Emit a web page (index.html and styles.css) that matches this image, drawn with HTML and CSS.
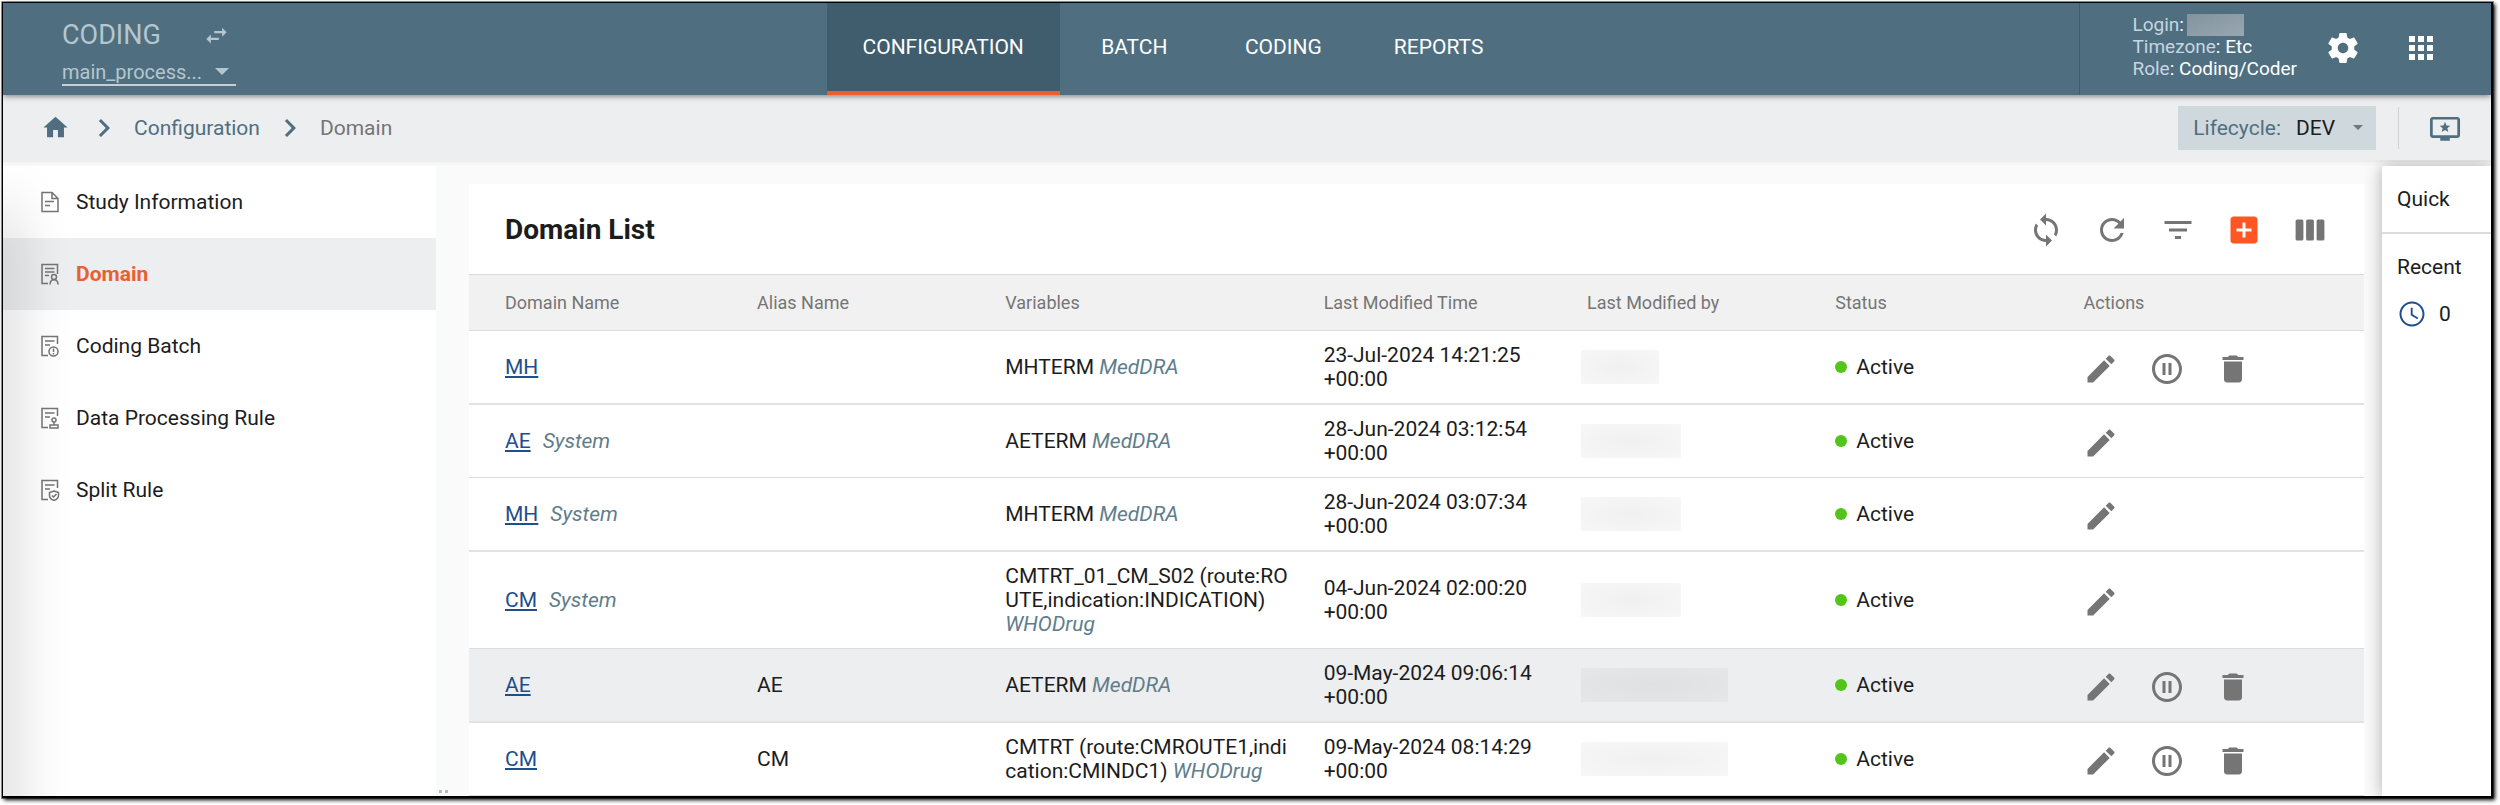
FILE: index.html
```html
<!DOCTYPE html>
<html lang="en">
<head>
<meta charset="utf-8">
<title>Coding - Domain List</title>
<link rel="stylesheet" href="styles.css">
</head>
<body>
<svg class="sprite" aria-hidden="true">
  <symbol id="swap" viewBox="0 0 24 24"><path d="M6.99 11L3 15l3.99 4v-3H14v-2H6.99v-3zM21 9l-3.99-4v3H10v2h7.01v3L21 9z"/></symbol>
  <symbol id="caret" viewBox="0 0 14 7"><path d="M0 0h14L7 7z"/></symbol>
  <symbol id="gear" viewBox="0 0 24 24"><path d="M19.43 12.98c.04-.32.07-.64.07-.98s-.03-.66-.07-.98l2.11-1.65c.19-.15.24-.42.12-.64l-2-3.46c-.12-.22-.39-.3-.61-.22l-2.49 1c-.52-.4-1.08-.73-1.69-.98l-.38-2.65C14.46 2.18 14.25 2 14 2h-4c-.25 0-.46.18-.49.42l-.38 2.65c-.61.25-1.17.59-1.69.98l-2.49-1c-.23-.09-.49 0-.61.22l-2 3.46c-.13.22-.07.49.12.64l2.11 1.65c-.04.32-.07.65-.07.98s.03.66.07.98l-2.11 1.65c-.19.15-.24.42-.12.64l2 3.46c.12.22.39.3.61.22l2.49-1c.52.4 1.08.73 1.69.98l.38 2.65c.03.24.24.42.49.42h4c.25 0 .46-.18.49-.42l.38-2.65c.61-.25 1.17-.59 1.69-.98l2.49 1c.23.09.49 0 .61-.22l2-3.46c.12-.22.07-.49-.12-.64l-2.11-1.65zM12 15.5c-1.93 0-3.5-1.57-3.5-3.5s1.57-3.5 3.5-3.5 3.5 1.57 3.5 3.5-1.57 3.5-3.5 3.5z"/></symbol>
  <symbol id="apps" viewBox="0 0 24 24"><path d="M4 8h4V4H4v4zm6 12h4v-4h-4v4zm-6 0h4v-4H4v4zm0-6h4v-4H4v4zm6 0h4v-4h-4v4zm6-10v4h4V4h-4zm-6 4h4V4h-4v4zm6 6h4v-4h-4v4zm0 6h4v-4h-4v4z"/></symbol>
  <symbol id="home" viewBox="0 0 24 24"><path d="M10 20v-6h4v6h5v-8h3L12 3 2 12h3v8z"/></symbol>
  <symbol id="chevron" viewBox="0 0 24 24"><path d="M10 6L8.590 7.410 13.170 12l-4.580 4.590L10 18l6-6z"/></symbol>
  <symbol id="monitor" viewBox="0 0 24 24"><path d="M21 3.500H3c-1.100 0-2 .9-2 2v11.500c0 1.100.9 2 2 2h5.500V21h7v-2H21c1.100 0 1.990-.9 1.990-2L23 5.500c0-1.100-.9-2-2-2zm0 13.500H3V5.500h18v11.500z" transform="translate(1.100 1.400) scale(.91)"/><path d="M12 7.900l.95 2.450 2.600.15-2 1.650.65 2.550-2.200-1.400-2.200 1.400.65-2.550-2-1.650 2.600-.15z"/></symbol>
  <symbol id="sync" viewBox="0 0 24 24"><path d="M12 4V1L8 5l4 4V6c3.310 0 6 2.690 6 6 0 1.010-.25 1.970-.7 2.800l1.460 1.460C19.540 15.030 20 13.570 20 12c0-4.420-3.580-8-8-8zm0 14c-3.310 0-6-2.690-6-6 0-1.010.25-1.970.7-2.800L5.240 7.740C4.460 8.970 4 10.430 4 12c0 4.420 3.580 8 8 8v3l4-4-4-4v3z"/></symbol>
  <symbol id="refresh" viewBox="0 0 24 24"><path d="M17.650 6.350C16.200 4.900 14.210 4 12 4c-4.420 0-7.990 3.580-7.990 8s3.570 8 7.990 8c3.730 0 6.840-2.550 7.730-6h-2.080c-.82 2.330-3.040 4-5.650 4-3.310 0-6-2.690-6-6s2.690-6 6-6c1.660 0 3.140.69 4.220 1.780L13 11h7V4l-2.350 2.350z"/></symbol>
  <symbol id="filter" viewBox="0 0 24 24"><path d="M10 18h4v-2h-4v2zM3 6v2h18V6H3zm3 7h12v-2H6v2z"/></symbol>
  <symbol id="add" viewBox="0 0 24 24"><path d="M19 3H5c-1.110 0-2 .9-2 2v14c0 1.100.89 2 2 2h14c1.100 0 2-.9 2-2V5c0-1.100-.9-2-2-2zm-2 10h-4v4h-2v-4H7v-2h4V7h2v4h4v2z"/></symbol>
  <symbol id="columns" viewBox="0 0 24 24"><rect x="2.400" y="5" width="5.200" height="14" rx="1"/><rect x="9.400" y="5" width="5.200" height="14" rx="1"/><rect x="16.400" y="5" width="5.200" height="14" rx="1"/></symbol>
  <symbol id="edit" viewBox="0 0 24 24"><path d="M3 17.250V21h3.750L17.810 9.940l-3.750-3.750L3 17.250zM20.710 7.040c.39-.39.39-1.020 0-1.410l-2.340-2.340c-.39-.39-1.020-.39-1.410 0l-1.830 1.830 3.750 3.750 1.830-1.830z"/></symbol>
  <symbol id="pause" viewBox="0 0 24 24"><path d="M9 16h2V8H9v8zm3-14C6.480 2 2 6.480 2 12s4.480 10 10 10 10-4.480 10-10S17.520 2 12 2zm0 18c-4.410 0-8-3.590-8-8s3.590-8 8-8 8 3.590 8 8-3.590 8-8 8zm1-4h2V8h-2v8z"/></symbol>
  <symbol id="trash" viewBox="0 0 24 24"><path d="M6 19c0 1.100.9 2 2 2h8c1.100 0 2-.9 2-2V7H6v12zM19 4h-3.500l-1-1h-5l-1 1H5v2h14V4z"/></symbol>
  <symbol id="clock" viewBox="0 0 24 24"><path d="M11.990 2C6.470 2 2 6.480 2 12s4.470 10 9.990 10C17.520 22 22 17.520 22 12S17.520 2 11.990 2zM12 20.400c-4.640 0-8.400-3.760-8.400-8.400s3.760-8.400 8.400-8.400 8.400 3.760 8.400 8.400-3.760 8.400-8.400 8.400z"/><path d="M12.500 7H11v6l5.250 3.150.75-1.230-4.500-2.670z"/></symbol>
  <symbol id="doc" viewBox="0 0 20 22"><path d="M12 1.500H2v19h16V7.500zM12 1.500v6h6M5 10.500h9M5 14.500h5"/></symbol>
  <symbol id="doc-user" viewBox="0 0 20 22"><path d="M8 20.500H2v-19h15.500V11M5 5.500h9.500M5 9h9.500M5 12.500h4"/><circle cx="14" cy="14" r="2.500"/><path d="M10 21.500c0-6.500 8-6.500 8 0"/></symbol>
  <symbol id="doc-alert" viewBox="0 0 20 22"><path d="M8 20.500H2v-19h15.500V9M5 6h9.500M5 10h5"/><circle cx="13.500" cy="16.500" r="4.500"/><path d="M13.500 13.500v3.500M13.500 18v1.500"/></symbol>
  <symbol id="doc-stamp" viewBox="0 0 20 22"><path d="M8 20.500H2v-19h15.500V9M5 6h9.500M5 10h5"/><circle cx="14" cy="13" r="2"/><path d="M14 15v3M10 21v-3h8v3z"/></symbol>
  <symbol id="doc-shield" viewBox="0 0 20 22"><path d="M8 20.500H2v-19h15.500V9M5 6h9.500M5 10h5"/><path d="M14 12l4.500 1.500v3c0 2.500-2 4-4.500 5-2.500-1-4.500-2.500-4.500-5v-3zM12 16.500l1.500 1.500 3-3"/></symbol>
</svg>

<div class="window">
  <header class="topbar">
    <div class="brand">
      <div class="brand-row">
        <span class="brand-name">CODING</span>
        <button class="icon-btn" type="button" aria-label="Switch application"><svg class="icon-swap"><use href="#swap"/></svg></button>
      </div>
      <div class="process">
        <select class="process-select" aria-label="Process"><option>main_process...</option></select>
        <svg class="caret"><use href="#caret"/></svg>
      </div>
    </div>
    <nav class="tabs" aria-label="Main">
      <a class="tab tab-active" href="#configuration">CONFIGURATION</a>
      <a class="tab" href="#batch">BATCH</a>
      <a class="tab" href="#coding">CODING</a>
      <a class="tab" href="#reports">REPORTS</a>
    </nav>
    <div class="account">
      <div class="account-info">
        <div class="account-line"><span class="account-key">Login</span>:<span class="account-mask"></span></div>
        <div><span class="account-key">Timezone</span>: Etc</div>
        <div><span class="account-key">Role</span>: Coding/Coder</div>
      </div>
      <div class="account-tools">
        <button class="icon-btn" type="button" aria-label="Settings"><svg class="icon"><use href="#gear"/></svg></button>
        <button class="icon-btn" type="button" aria-label="Applications"><svg class="icon"><use href="#apps"/></svg></button>
      </div>
    </div>
  </header>

  <div class="subbar">
    <nav class="crumbs" aria-label="Breadcrumb">
      <a class="crumb-home" href="#home" aria-label="Home"><svg class="icon-home"><use href="#home"/></svg></a>
      <svg class="icon"><use href="#chevron"/></svg>
      <a class="crumb" href="#configuration">Configuration</a>
      <svg class="icon"><use href="#chevron"/></svg>
      <span class="crumb-current">Domain</span>
    </nav>
    <div class="subbar-tools">
      <div class="lifecycle">
        <label class="lifecycle-label" for="lifecycle">Lifecycle:</label>
        <select class="lifecycle-select" id="lifecycle"><option>DEV</option></select>
        <svg class="caret-small"><use href="#caret"/></svg>
      </div>
      <div class="subbar-quick">
        <button class="icon-btn" type="button" aria-label="Quick access"><svg class="icon"><use href="#monitor"/></svg></button>
      </div>
    </div>
  </div>

  <div class="workspace">
    <nav class="sidebar" aria-label="Configuration">
      <a class="side-link" href="#study"><svg class="side-icon"><use href="#doc"/></svg>Study Information</a>
      <a class="side-link side-active" href="#domain"><svg class="side-icon"><use href="#doc-user"/></svg>Domain</a>
      <a class="side-link" href="#coding-batch"><svg class="side-icon"><use href="#doc-alert"/></svg>Coding Batch</a>
      <a class="side-link" href="#data-rule"><svg class="side-icon"><use href="#doc-stamp"/></svg>Data Processing Rule</a>
      <a class="side-link" href="#split-rule"><svg class="side-icon"><use href="#doc-shield"/></svg>Split Rule</a>
    </nav>
    <div class="splitter"><span class="splitter-dot"></span><span class="splitter-dot"></span></div>

    <main class="card">
      <div class="card-head">
        <h1 class="card-title">Domain List</h1>
        <div class="card-tools">
          <button class="icon-btn" type="button" aria-label="Sync"><svg class="icon"><use href="#sync"/></svg></button>
          <button class="icon-btn" type="button" aria-label="Refresh"><svg class="icon"><use href="#refresh"/></svg></button>
          <button class="icon-btn" type="button" aria-label="Filter"><svg class="icon"><use href="#filter"/></svg></button>
          <button class="icon-btn icon-btn-add" type="button" aria-label="Add domain"><svg class="icon"><use href="#add"/></svg></button>
          <button class="icon-btn" type="button" aria-label="Columns"><svg class="icon"><use href="#columns"/></svg></button>
        </div>
      </div>
      <table class="domains">
        <colgroup><col class="col-name"><col class="col-alias"><col class="col-vars"><col class="col-time"><col class="col-by"><col class="col-status"><col></colgroup>
        <thead>
          <tr><th>Domain Name</th><th>Alias Name</th><th>Variables</th><th>Last Modified Time</th><th>Last Modified by</th><th>Status</th><th>Actions</th></tr>
        </thead>
        <tbody>
          <tr>
            <td><a class="domain-link" href="#d1">MH</a></td><td></td>
            <td class="vars">MHTERM <em class="note">MedDRA</em></td>
            <td>23-Jul-2024 14:21:25 +00:00</td>
            <td><span class="mask mask-short"></span></td>
            <td><span class="status">Active</span></td>
            <td><div class="actions">
              <button class="icon-btn" type="button" aria-label="Edit"><svg class="icon"><use href="#edit"/></svg></button>
              <button class="icon-btn" type="button" aria-label="Pause"><svg class="icon"><use href="#pause"/></svg></button>
              <button class="icon-btn" type="button" aria-label="Delete"><svg class="icon"><use href="#trash"/></svg></button>
            </div></td>
          </tr>
          <tr>
            <td><a class="domain-link" href="#d2">AE</a><em class="note note-system">System</em></td><td></td>
            <td class="vars">AETERM <em class="note">MedDRA</em></td>
            <td>28-Jun-2024 03:12:54 +00:00</td>
            <td><span class="mask"></span></td>
            <td><span class="status">Active</span></td>
            <td><div class="actions">
              <button class="icon-btn" type="button" aria-label="Edit"><svg class="icon"><use href="#edit"/></svg></button>
            </div></td>
          </tr>
          <tr>
            <td><a class="domain-link" href="#d3">MH</a><em class="note note-system">System</em></td><td></td>
            <td class="vars">MHTERM <em class="note">MedDRA</em></td>
            <td>28-Jun-2024 03:07:34 +00:00</td>
            <td><span class="mask"></span></td>
            <td><span class="status">Active</span></td>
            <td><div class="actions">
              <button class="icon-btn" type="button" aria-label="Edit"><svg class="icon"><use href="#edit"/></svg></button>
            </div></td>
          </tr>
          <tr>
            <td><a class="domain-link" href="#d4">CM</a><em class="note note-system">System</em></td><td></td>
            <td class="vars">CMTRT_01_CM_S02 (route:ROUTE,indication:INDICATION) <em class="note">WHODrug</em></td>
            <td>04-Jun-2024 02:00:20 +00:00</td>
            <td><span class="mask"></span></td>
            <td><span class="status">Active</span></td>
            <td><div class="actions">
              <button class="icon-btn" type="button" aria-label="Edit"><svg class="icon"><use href="#edit"/></svg></button>
            </div></td>
          </tr>
          <tr class="row-hover">
            <td><a class="domain-link" href="#d5">AE</a></td><td>AE</td>
            <td class="vars">AETERM <em class="note">MedDRA</em></td>
            <td>09-May-2024 09:06:14 +00:00</td>
            <td><span class="mask mask-long"></span></td>
            <td><span class="status">Active</span></td>
            <td><div class="actions">
              <button class="icon-btn" type="button" aria-label="Edit"><svg class="icon"><use href="#edit"/></svg></button>
              <button class="icon-btn" type="button" aria-label="Pause"><svg class="icon"><use href="#pause"/></svg></button>
              <button class="icon-btn" type="button" aria-label="Delete"><svg class="icon"><use href="#trash"/></svg></button>
            </div></td>
          </tr>
          <tr>
            <td><a class="domain-link" href="#d6">CM</a></td><td>CM</td>
            <td class="vars">CMTRT (route:CMROUTE1,indication:CMINDC1) <em class="note">WHODrug</em></td>
            <td>09-May-2024 08:14:29 +00:00</td>
            <td><span class="mask mask-long"></span></td>
            <td><span class="status">Active</span></td>
            <td><div class="actions">
              <button class="icon-btn" type="button" aria-label="Edit"><svg class="icon"><use href="#edit"/></svg></button>
              <button class="icon-btn" type="button" aria-label="Pause"><svg class="icon"><use href="#pause"/></svg></button>
              <button class="icon-btn" type="button" aria-label="Delete"><svg class="icon"><use href="#trash"/></svg></button>
            </div></td>
          </tr>
        </tbody>
      </table>
    </main>

    <aside class="quick">
      <h2 class="quick-title">Quick</h2>
      <section class="recent">
        <h2 class="recent-title">Recent</h2>
        <div class="recent-count"><svg class="icon-clock"><use href="#clock"/></svg><span>0</span></div>
      </section>
    </aside>
  </div>
</div>
</body>
</html>
```

FILE: styles.css
```css
* { box-sizing: border-box; }

body {
  margin: 0;
  height: 100vh;
  padding: 2px 7px 7px 2px;
  display: flex;
  background: #fff;
  color: #1c1c1c;
  font: 21px/24px Roboto, "Liberation Sans", sans-serif;
}

h1, h2 { margin: 0; font-weight: 400; font-size: inherit; }
a { color: inherit; text-decoration: none; }
svg { display: block; flex: none; fill: currentColor; }
select {
  appearance: none;
  border: 0;
  padding: 0;
  background: transparent;
  color: inherit;
  font: inherit;
}

.sprite { position: absolute; width: 0; height: 0; }
.icon { width: 36px; height: 36px; }
.icon-btn { display: block; border: 0; padding: 0; background: none; color: inherit; cursor: pointer; }

.window {
  flex: 1;
  min-width: 0;
  display: flex;
  flex-direction: column;
  overflow: hidden;
  border: solid #000;
  border-width: 1px 2px 2px 1px;
  background: #fafafa;
  box-shadow: 2px 2px 4px #000, 0 0 0 1px #999;
}

/* Top bar */
.topbar {
  flex: none;
  position: relative;
  z-index: 2;
  height: 92px;
  display: flex;
  background: #4f6f80;
  color: #fff;
  box-shadow: 0 1px 6px rgba(0, 0, 0, .5);
}
.brand { width: 33.1%; padding: 16px 0 0 59px; color: #b5c6cf; }
.brand-row { display: flex; align-items: center; gap: 42px; height: 32px; }
.brand-name { font-size: 27px; line-height: 32px; }
.icon-swap { width: 27px; height: 27px; }
.process {
  display: flex;
  align-items: center;
  width: 174px;
  height: 35px;
  padding-top: 8px;
  border-bottom: 2px solid #c3d0d7;
}
.process-select { width: 153px; font-size: 20px; }
.caret { width: 14px; height: 7px; }
.tabs { display: flex; }
.tab {
  display: flex;
  align-items: center;
  justify-content: center;
  min-width: 149px;
  padding: 0 36px 4px;
  line-height: 24px;
}
.tab-active { background: #405d6d; border-bottom: 4px solid #e8602f; padding-bottom: 0; }
.account {
  margin-left: auto;
  display: flex;
  align-items: center;
  gap: 28px;
  padding: 0 52px;
  border-left: 1px solid #405d6d;
  font-size: 19px;
  line-height: 22px;
}
.account-info { padding-bottom: 5px; }
.account-line { display: flex; align-items: center; }
.account-key { color: #c6d6e2; }
.account-mask { width: 57px; height: 22px; margin-left: 3px; background: linear-gradient(160deg, #83949f, #98a6b0); }
.account-tools { display: flex; gap: 42px; padding-bottom: 2px; }

/* Breadcrumb bar */
.subbar {
  flex: none;
  display: flex;
  justify-content: space-between;
  align-items: center;
  height: 67px;
  margin-bottom: 4px;
  padding: 0 28px 2px 38px;
  background: #edeef0;
  color: #4f6f80;
  box-shadow: 0 2px 4px rgba(0, 0, 0, .03);
}
.crumbs { display: flex; align-items: center; gap: 12px; }
.crumb-home { margin-right: 4px; }
.icon-home { width: 29px; height: 29px; }
.crumb-current { color: #757575; }
.subbar-tools { display: flex; align-items: center; gap: 22px; }
.lifecycle { display: flex; align-items: center; height: 44px; padding: 0 13px 0 15px; background: #cfd8dd; }
.lifecycle-select { margin: 0 17px 0 15px; color: #1c1c1c; }
.caret-small { width: 10px; height: 5px; color: #757575; }
.subbar-quick { padding: 3px 0 3px 28px; border-left: 1px solid #cfd2d4; }

/* Workspace */
.workspace { flex: 1; min-height: 0; display: flex; align-items: stretch; }
.sidebar { flex: none; width: 433px; position: relative; overflow: hidden; background: #fff; }
.sidebar::before {
  content: "";
  position: absolute;
  top: 48px;
  bottom: -60px;
  left: -10px;
  width: 10px;
  box-shadow: 0 0 56px 6px rgba(0, 0, 0, .28);
  z-index: 1;
  pointer-events: none;
}
.side-link { display: flex; align-items: center; gap: 16px; height: 72px; padding-left: 37px; }
.side-icon { width: 20px; height: 22px; fill: none; stroke: #757575; stroke-width: 1.5; }
.side-active { background: #edeef0; color: #e8602f; font-weight: 700; }
.splitter {
  flex: none;
  display: flex;
  align-items: flex-end;
  gap: 3px;
  width: 12px;
  margin-right: 21px;
  padding: 0 0 3px 3px;
  background: #f9fbfa;
}
.splitter-dot { width: 3px; height: 3px; background: #bbb; }

.card { flex: 1; min-width: 0; margin: 18px 18px 0 0; background: #fff; }
.card-head { display: flex; align-items: center; justify-content: space-between; height: 90px; padding: 2px 36px 0 36px; }
.card-title { font-size: 28px; line-height: 32px; font-weight: 700; }
.card-tools { display: flex; gap: 30px; color: #757575; }
.icon-btn-add { color: #ff5722; }

.domains { width: 100%; table-layout: fixed; border-collapse: separate; border-spacing: 0; }
.col-name { width: 15.2%; }
.col-alias { width: 13.1%; }
.col-vars { width: 16.8%; }
.col-time { width: 13.9%; }
.col-by { width: 13.1%; }
.col-status { width: 13.1%; }
.domains th {
  height: 57px;
  padding: 0;
  border: solid #dcdcdc;
  border-width: 1px 0;
  background: #f1f1f1;
  color: #757575;
  font-size: 18px;
  font-weight: 400;
  text-align: left;
}
.domains td { padding: 12px 30px 12px 0; border-bottom: 1px solid #dcdcdc; }
.domains tr:nth-child(odd) td { border-bottom: 2px solid #e2e2e2; }
.domains th:first-child, .domains td:first-child { padding-left: 36px; }
.vars { word-break: break-all; }
.row-hover td { background: #edeef0; }
.domain-link { color: #1f4e8c; text-decoration: underline; text-decoration-thickness: 2px; text-underline-offset: 2px; }
.note { color: #607d8b; white-space: nowrap; }
.note-system { margin-left: 12px; }
.mask {
  display: block;
  width: 100px;
  height: 34px;
  margin-left: -6px;
  background: radial-gradient(ellipse at center, rgba(0, 0, 0, .06), rgba(0, 0, 0, .03));
}
.mask-short { width: 78px; }
.mask-long { width: 147px; }
.status { display: flex; align-items: center; gap: 9px; }
.status::before { content: ""; width: 12px; height: 12px; border-radius: 50%; background: #52c41a; }
.actions { display: flex; gap: 30px; padding-top: 4px; color: #757575; }

/* Quick panel */
.quick { flex: none; width: 109px; background: #fff; box-shadow: 0 0 16px rgba(0, 0, 0, .3); clip-path: inset(-6px 0 0 -20px); }
.quick-title { height: 68px; padding: 21px 15px; border-bottom: 2px solid #dcdcdc; }
.recent { padding: 21px 15px; }
.recent-count { display: flex; align-items: center; gap: 12px; padding-top: 20px; }
.icon-clock { width: 30px; height: 30px; color: #1f4e8c; }
```
